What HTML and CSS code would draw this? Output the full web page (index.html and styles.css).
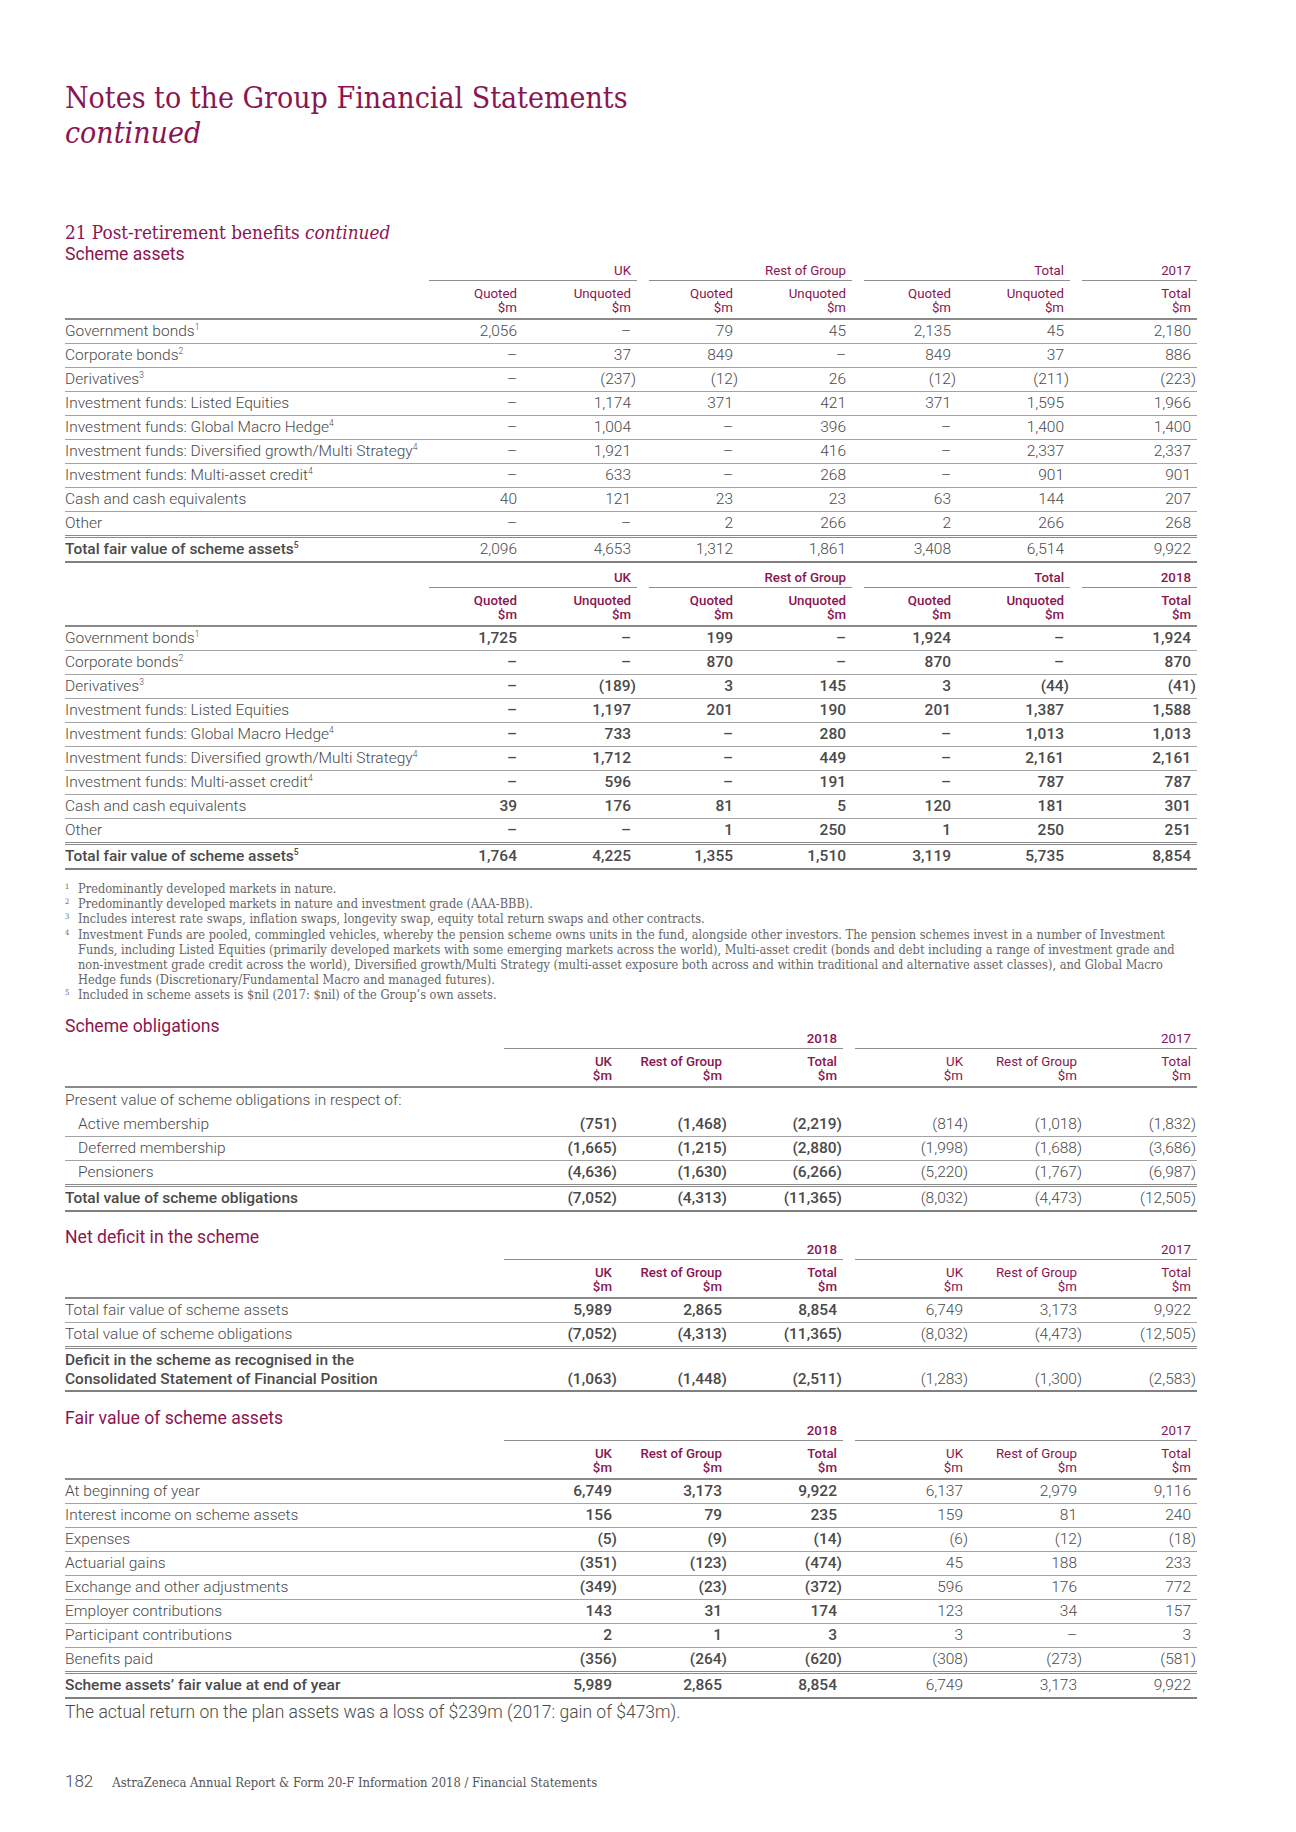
FILE: index.html
```html
<!DOCTYPE html>
<html lang="en">
<head>
<meta charset="utf-8">
<title>Notes to the Group Financial Statements</title>
<link rel="stylesheet" href="styles.css">
</head>
<body>
<div class="page">
  <h1 class="title">Notes to the Group Financial Statements<br><em>continued</em></h1>

  <h2 class="note">21 Post-retirement benefits <em>continued</em></h2>
  <h3 class="sub first">Scheme assets</h3>

  <table class="fin assets">
    <colgroup><col class="c-label"><col class="c1"><col class="c2"><col class="c3"><col class="c4"><col class="c5"><col class="c6"><col class="c7"></colgroup>
    <thead>
      <tr class="grp">
        <th></th>
        <th colspan="2"><div class="gl first">UK</div></th>
        <th colspan="2"><div class="gl">Rest of Group</div></th>
        <th colspan="2"><div class="gl">Total</div></th>
        <th><div class="gl">2017</div></th>
      </tr>
      <tr class="hd">
        <th></th>
        <th>Quoted<br>$m</th><th>Unquoted<br>$m</th>
        <th>Quoted<br>$m</th><th>Unquoted<br>$m</th>
        <th>Quoted<br>$m</th><th>Unquoted<br>$m</th>
        <th>Total<br>$m</th>
      </tr>
    </thead>
    <tbody>
      <tr><td>Government bonds<sup>1</sup></td><td>2,056</td><td>–</td><td>79</td><td>45</td><td>2,135</td><td>45</td><td>2,180</td></tr>
      <tr><td>Corporate bonds<sup>2</sup></td><td>–</td><td>37</td><td>849</td><td>–</td><td>849</td><td>37</td><td>886</td></tr>
      <tr><td>Derivatives<sup>3</sup></td><td>–</td><td class="n">(237)</td><td class="n">(12)</td><td>26</td><td class="n">(12)</td><td class="n">(211)</td><td class="n">(223)</td></tr>
      <tr><td>Investment funds: Listed Equities</td><td>–</td><td>1,174</td><td>371</td><td>421</td><td>371</td><td>1,595</td><td>1,966</td></tr>
      <tr><td>Investment funds: Global Macro Hedge<sup>4</sup></td><td>–</td><td>1,004</td><td>–</td><td>396</td><td>–</td><td>1,400</td><td>1,400</td></tr>
      <tr><td>Investment funds: Diversified growth/Multi Strategy<sup>4</sup></td><td>–</td><td>1,921</td><td>–</td><td>416</td><td>–</td><td>2,337</td><td>2,337</td></tr>
      <tr><td>Investment funds: Multi-asset credit<sup>4</sup></td><td>–</td><td>633</td><td>–</td><td>268</td><td>–</td><td>901</td><td>901</td></tr>
      <tr><td>Cash and cash equivalents</td><td>40</td><td>121</td><td>23</td><td>23</td><td>63</td><td>144</td><td>207</td></tr>
      <tr class="pre"><td>Other</td><td>–</td><td>–</td><td>2</td><td>266</td><td>2</td><td>266</td><td>268</td></tr>
      <tr class="tot"><td class="lb">Total fair value of scheme assets<sup>5</sup></td><td>2,096</td><td>4,653</td><td>1,312</td><td>1,861</td><td>3,408</td><td>6,514</td><td>9,922</td></tr>
    </tbody>
  </table>

  <table class="fin assets cur second">
    <colgroup><col class="c-label"><col class="c1"><col class="c2"><col class="c3"><col class="c4"><col class="c5"><col class="c6"><col class="c7"></colgroup>
    <thead>
      <tr class="grp">
        <th></th>
        <th colspan="2"><div class="gl first">UK</div></th>
        <th colspan="2"><div class="gl">Rest of Group</div></th>
        <th colspan="2"><div class="gl">Total</div></th>
        <th><div class="gl">2018</div></th>
      </tr>
      <tr class="hd">
        <th></th>
        <th>Quoted<br>$m</th><th>Unquoted<br>$m</th>
        <th>Quoted<br>$m</th><th>Unquoted<br>$m</th>
        <th>Quoted<br>$m</th><th>Unquoted<br>$m</th>
        <th>Total<br>$m</th>
      </tr>
    </thead>
    <tbody>
      <tr><td>Government bonds<sup>1</sup></td><td>1,725</td><td>–</td><td>199</td><td>–</td><td>1,924</td><td>–</td><td>1,924</td></tr>
      <tr><td>Corporate bonds<sup>2</sup></td><td>–</td><td>–</td><td>870</td><td>–</td><td>870</td><td>–</td><td>870</td></tr>
      <tr><td>Derivatives<sup>3</sup></td><td>–</td><td class="n">(189)</td><td>3</td><td>145</td><td>3</td><td class="n">(44)</td><td class="n">(41)</td></tr>
      <tr><td>Investment funds: Listed Equities</td><td>–</td><td>1,197</td><td>201</td><td>190</td><td>201</td><td>1,387</td><td>1,588</td></tr>
      <tr><td>Investment funds: Global Macro Hedge<sup>4</sup></td><td>–</td><td>733</td><td>–</td><td>280</td><td>–</td><td>1,013</td><td>1,013</td></tr>
      <tr><td>Investment funds: Diversified growth/Multi Strategy<sup>4</sup></td><td>–</td><td>1,712</td><td>–</td><td>449</td><td>–</td><td>2,161</td><td>2,161</td></tr>
      <tr><td>Investment funds: Multi-asset credit<sup>4</sup></td><td>–</td><td>596</td><td>–</td><td>191</td><td>–</td><td>787</td><td>787</td></tr>
      <tr><td>Cash and cash equivalents</td><td>39</td><td>176</td><td>81</td><td>5</td><td>120</td><td>181</td><td>301</td></tr>
      <tr class="pre"><td>Other</td><td>–</td><td>–</td><td>1</td><td>250</td><td>1</td><td>250</td><td>251</td></tr>
      <tr class="tot"><td class="lb">Total fair value of scheme assets<sup>5</sup></td><td>1,764</td><td>4,225</td><td>1,355</td><td>1,510</td><td>3,119</td><td>5,735</td><td>8,854</td></tr>
    </tbody>
  </table>

  <ol class="notes">
    <li><span class="mk">1</span><span>Predominantly developed markets in nature.</span></li>
    <li><span class="mk">2</span><span>Predominantly developed markets in nature and investment grade (AAA-BBB).</span></li>
    <li><span class="mk">3</span><span>Includes interest rate swaps, inflation swaps, longevity swap, equity total return swaps and other contracts.</span></li>
    <li><span class="mk">4</span><span>Investment Funds are pooled, commingled vehicles, whereby the pension scheme owns units in the fund, alongside other investors. The pension schemes invest in a number of Investment<br>Funds, including Listed Equities (primarily developed markets with some emerging markets across the world), Multi-asset credit (bonds and debt including a range of investment grade and<br>non-investment grade credit across the world), Diversified growth/Multi Strategy (multi-asset exposure both across and within traditional and alternative asset classes), and Global Macro<br>Hedge funds (Discretionary/Fundamental Macro and managed futures).</span></li>
    <li><span class="mk">5</span><span>Included in scheme assets is $nil (2017: $nil) of the Group’s own assets.</span></li>
  </ol>

  <h3 class="sub obl-h">Scheme obligations</h3>
  <table class="fin yr">
    <colgroup><col class="y-label"><col class="y1"><col class="y2"><col class="y3"><col class="y4"><col class="y5"><col class="y6"></colgroup>
    <thead>
      <tr class="grp">
        <th></th>
        <th colspan="3"><div class="gl first b">2018</div></th>
        <th colspan="3"><div class="gl">2017</div></th>
      </tr>
      <tr class="hd">
        <th></th>
        <th class="b">UK<br>$m</th><th class="b">Rest of Group<br>$m</th><th class="b">Total<br>$m</th>
        <th>UK<br>$m</th><th>Rest of Group<br>$m</th><th>Total<br>$m</th>
      </tr>
    </thead>
    <tbody>
      <tr class="plain"><td>Present value of scheme obligations in respect of:</td><td></td><td></td><td></td><td></td><td></td><td></td></tr>
      <tr><td class="ind">Active membership</td><td class="n b">(751)</td><td class="n b">(1,468)</td><td class="n b">(2,219)</td><td class="n">(814)</td><td class="n">(1,018)</td><td class="n">(1,832)</td></tr>
      <tr><td class="ind">Deferred membership</td><td class="n b">(1,665)</td><td class="n b">(1,215)</td><td class="n b">(2,880)</td><td class="n">(1,998)</td><td class="n">(1,688)</td><td class="n">(3,686)</td></tr>
      <tr class="pre"><td class="ind">Pensioners</td><td class="n b">(4,636)</td><td class="n b">(1,630)</td><td class="n b">(6,266)</td><td class="n">(5,220)</td><td class="n">(1,767)</td><td class="n">(6,987)</td></tr>
      <tr class="tot"><td class="lb">Total value of scheme obligations</td><td class="n b">(7,052)</td><td class="n b">(4,313)</td><td class="n b">(11,365)</td><td class="n">(8,032)</td><td class="n">(4,473)</td><td class="n">(12,505)</td></tr>
    </tbody>
  </table>

  <h3 class="sub">Net deficit in the scheme</h3>
  <table class="fin yr">
    <colgroup><col class="y-label"><col class="y1"><col class="y2"><col class="y3"><col class="y4"><col class="y5"><col class="y6"></colgroup>
    <thead>
      <tr class="grp">
        <th></th>
        <th colspan="3"><div class="gl first b">2018</div></th>
        <th colspan="3"><div class="gl">2017</div></th>
      </tr>
      <tr class="hd">
        <th></th>
        <th class="b">UK<br>$m</th><th class="b">Rest of Group<br>$m</th><th class="b">Total<br>$m</th>
        <th>UK<br>$m</th><th>Rest of Group<br>$m</th><th>Total<br>$m</th>
      </tr>
    </thead>
    <tbody>
      <tr><td>Total fair value of scheme assets</td><td class="b">5,989</td><td class="b">2,865</td><td class="b">8,854</td><td>6,749</td><td>3,173</td><td>9,922</td></tr>
      <tr class="pre"><td>Total value of scheme obligations</td><td class="n b">(7,052)</td><td class="n b">(4,313)</td><td class="n b">(11,365)</td><td class="n">(8,032)</td><td class="n">(4,473)</td><td class="n">(12,505)</td></tr>
      <tr class="tot tall"><td class="lb">Deficit in the scheme as recognised in the<br>Consolidated Statement of Financial Position</td><td class="n b">(1,063)</td><td class="n b">(1,448)</td><td class="n b">(2,511)</td><td class="n">(1,283)</td><td class="n">(1,300)</td><td class="n">(2,583)</td></tr>
    </tbody>
  </table>

  <h3 class="sub fv-h">Fair value of scheme assets</h3>
  <table class="fin yr">
    <colgroup><col class="y-label"><col class="y1"><col class="y2"><col class="y3"><col class="y4"><col class="y5"><col class="y6"></colgroup>
    <thead>
      <tr class="grp">
        <th></th>
        <th colspan="3"><div class="gl first b">2018</div></th>
        <th colspan="3"><div class="gl">2017</div></th>
      </tr>
      <tr class="hd">
        <th></th>
        <th class="b">UK<br>$m</th><th class="b">Rest of Group<br>$m</th><th class="b">Total<br>$m</th>
        <th>UK<br>$m</th><th>Rest of Group<br>$m</th><th>Total<br>$m</th>
      </tr>
    </thead>
    <tbody>
      <tr><td>At beginning of year</td><td class="b">6,749</td><td class="b">3,173</td><td class="b">9,922</td><td>6,137</td><td>2,979</td><td>9,116</td></tr>
      <tr><td>Interest income on scheme assets</td><td class="b">156</td><td class="b">79</td><td class="b">235</td><td>159</td><td>81</td><td>240</td></tr>
      <tr><td>Expenses</td><td class="n b">(5)</td><td class="n b">(9)</td><td class="n b">(14)</td><td class="n">(6)</td><td class="n">(12)</td><td class="n">(18)</td></tr>
      <tr><td>Actuarial gains</td><td class="n b">(351)</td><td class="n b">(123)</td><td class="n b">(474)</td><td>45</td><td>188</td><td>233</td></tr>
      <tr><td>Exchange and other adjustments</td><td class="n b">(349)</td><td class="n b">(23)</td><td class="n b">(372)</td><td>596</td><td>176</td><td>772</td></tr>
      <tr><td>Employer contributions</td><td class="b">143</td><td class="b">31</td><td class="b">174</td><td>123</td><td>34</td><td>157</td></tr>
      <tr><td>Participant contributions</td><td class="b">2</td><td class="b">1</td><td class="b">3</td><td>3</td><td>–</td><td>3</td></tr>
      <tr class="pre"><td>Benefits paid</td><td class="n b">(356)</td><td class="n b">(264)</td><td class="n b">(620)</td><td class="n">(308)</td><td class="n">(273)</td><td class="n">(581)</td></tr>
      <tr class="tot"><td class="lb">Scheme assets’ fair value at end of year</td><td class="b">5,989</td><td class="b">2,865</td><td class="b">8,854</td><td>6,749</td><td>3,173</td><td>9,922</td></tr>
    </tbody>
  </table>

  <p class="return">The actual return on the plan assets was a loss of $239m (2017: gain of $473m).</p>

  <footer class="footer">
    <span class="pg">182</span>
    <span class="pub">AstraZeneca Annual Report &amp; Form 20-F Information 2018 / Financial Statements</span>
  </footer>
</div>
</body>
</html>
```

FILE: styles.css
```css
body {
  margin: 0;
  background: #ffffff;
  color: #4d4d4d;
  font-family: Roboto, "Liberation Sans", Arial, sans-serif;
}

.page {
  width: 1132px;
  padding: 80px 0 40px 65px;
}

.title {
  margin: 0;
  font-family: "DejaVu Serif", "Liberation Serif", serif;
  font-stretch: condensed;
  font-weight: normal;
  font-size: 30px;
  line-height: 35px;
  color: #8a1550;
}

.title em,
.note em {
  font-style: italic;
}

.note {
  margin: 72px 0 0;
  font-family: "DejaVu Serif", "Liberation Serif", serif;
  font-stretch: condensed;
  font-weight: normal;
  font-size: 18.8px;
  line-height: 22px;
  color: #8a1550;
}

.sub {
  margin: 15px 0 -4px;
  font-weight: 400;
  font-size: 17.6px;
  line-height: 20px;
  color: #8a1550;
}

.sub.first {
  margin: 0;
}

.sub.obl-h {
  margin-top: 13px;
}

.sub.fv-h {
  margin-top: 16px;
}

/* ---------- tables ---------- */
.fin {
  width: 1132px;
  table-layout: fixed;
  border-collapse: collapse;
  font-size: 15.5px;
  font-weight: 300;
  color: #4a4a4a;
}

.fin.second {
  margin-top: 8px;
}

.c-label { width: 364px; }
.c1 { width: 94px; }
.c2 { width: 114px; }
.c3 { width: 102px; }
.c4 { width: 113px; }
.c5 { width: 105px; }
.c6 { width: 113px; }
.c7 { width: 127px; }

.y-label { width: 439px; }
.y1 { width: 114px; }
.y2 { width: 110px; }
.y3 { width: 115px; }
.y4 { width: 126px; }
.y5 { width: 114px; }
.y6 { width: 114px; }

.fin th {
  padding: 0;
  font-weight: 400;
  font-size: 13.3px;
  line-height: 14px;
  color: #8a1550;
  text-align: right;
  vertical-align: bottom;
}

.fin .grp th {
  padding: 0;
}

.gl {
  margin-left: 12px;
  padding: 0 6px 2px 0;
  border-bottom: 1px solid #8f8f8f;
}

.gl.first {
  margin-left: 0;
}

.fin .hd th {
  padding: 6px 6px 3px 0;
  border-bottom: 2px solid #8a8a8a;
}

.fin td {
  padding: 0 6px 0 0;
  line-height: 23px;
  text-align: right;
  white-space: nowrap;
  border-bottom: 1px solid #a3a3a3;
}

.fin td:first-child {
  text-align: left;
}

.fin td.n {
  padding-right: 1px;
}

.fin td.ind {
  padding-left: 13px;
}

.fin .plain td {
  border-bottom-color: transparent;
  line-height: 24px;
}

.fin .pre td {
  border-bottom: 3px double #8a8a8a;
}

.fin .tot td {
  border-bottom: 2px solid #808080;
}

.fin .lb {
  font-weight: 500;
}

.fin .b {
  font-weight: 500;
}

.fin.cur td,
.fin.cur th {
  font-weight: 500;
}

.fin.cur td:first-child {
  font-weight: 300;
}

.fin.cur td.lb {
  font-weight: 500;
}

.fin .tall td {
  vertical-align: bottom;
  line-height: 19px;
  padding-top: 2px;
  padding-bottom: 1px;
}

.fin .tall td:first-child {
  white-space: normal;
}

.fin sup {
  font-size: 8.5px;
  line-height: 0;
  vertical-align: 6px;
}

/* ---------- footnotes ---------- */
.notes {
  list-style: none;
  margin: 11px 0 0;
  padding: 0;
  font-family: "DejaVu Serif", "Liberation Serif", serif;
  font-stretch: condensed;
  font-size: 12.7px;
  line-height: 15.2px;
  color: #666666;
}

.notes li {
  display: flex;
}

.notes .mk {
  flex: 0 0 13px;
  font-size: 7.5px;
  line-height: 12px;
}

/* ---------- closing text ---------- */
.return {
  margin: 2px 0 0;
  font-size: 17.5px;
  font-weight: 300;
  line-height: 22px;
  color: #4a4a4a;
}

.footer {
  display: flex;
  align-items: baseline;
  gap: 19px;
  margin-top: 48px;
  line-height: 20px;
}

.footer .pg {
  font-size: 17px;
  font-weight: 300;
  color: #4a4a4a;
}

.footer .pub {
  font-family: "DejaVu Serif", "Liberation Serif", serif;
  font-stretch: condensed;
  font-size: 12.9px;
  color: #555555;
}
```
